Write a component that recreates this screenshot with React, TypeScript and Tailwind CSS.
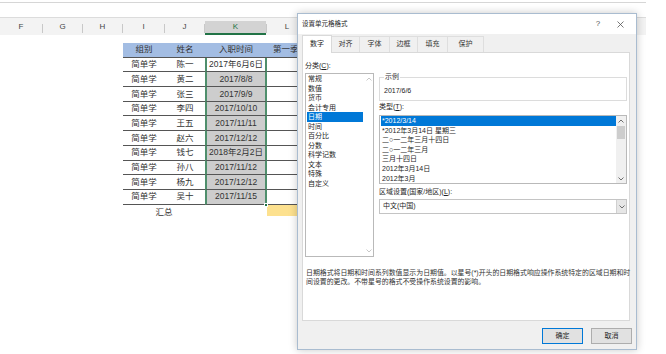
import React from 'react';

const font = "font-['Liberation_Sans','Noto_Sans_CJK_SC',sans-serif]";

const headerCols = [
  { name: 'F', w: 'w-[42px]' },
  { name: 'G', w: 'w-[39px]' },
  { name: 'H', w: 'w-[39px]' },
  { name: 'I', w: 'w-[41px]' },
  { name: 'J', w: 'w-[39px]' },
  { name: 'K', w: 'w-[61px]', active: true },
  { name: 'L', w: 'w-[40px]' },
];

const people = [
  ['陈一', '2017年6月6日'],
  ['黄二', '2017/8/8'],
  ['张三', '2017/9/9'],
  ['李四', '2017/10/10'],
  ['王五', '2017/11/11'],
  ['赵六', '2017/12/12'],
  ['钱七', '2018年2月2日'],
  ['孙八', '2017/11/12'],
  ['杨九', '2017/12/12'],
  ['吴十', '2017/11/15'],
];

const categories = ['常规', '数值', '货币', '会计专用', '日期', '时间', '百分比', '分数', '科学记数', '文本', '特殊', '自定义'];

const dateTypes = [
  '*2012/3/14',
  '*2012年3月14日 星期三',
  '二○一二年三月十四日',
  '二○一二年三月',
  '三月十四日',
  '2012年3月14日',
  '2012年3月',
];

const tabs = [
  { label: '对齐', w: 'w-[28px]' },
  { label: '字体', w: 'w-[30px]' },
  { label: '边框', w: 'w-[28px]' },
  { label: '填充', w: 'w-[30px]' },
  { label: '保护', w: 'w-[36px]' },
];

const Chevron: React.FC<{ up?: boolean; color?: string }> = ({ up, color = '#606060' }) => (
  <svg width="6" height="4" viewBox="0 0 6 4">
    <polyline
      points={up ? '0.5,3.5 3,1 5.5,3.5' : '0.5,0.5 3,3 5.5,0.5'}
      fill="none"
      stroke={color}
      strokeWidth="0.9"
    />
  </svg>
);

const Sheet: React.FC = () => (
  <div className="w-[646px] text-[#333]">
    <div className="h-[2px]" />
    <div className="h-[15px] border-t border-[#d6d6d6]" />
    <div className="flex h-[18px] bg-[#f3f3f3] border-t border-[#dcdcdc]">
      {headerCols.map((c) => (
        <React.Fragment key={c.name}>
          <div
            className={
              c.active
                ? `${c.w} flex items-center justify-center bg-[#d3d3d3] border-b-2 border-[#217346] text-[#217346] text-[8px] mt-[3px]`
                : `${c.w} flex items-center justify-center text-[8px] text-[#444]`
            }
          >
            {c.name}
          </div>
          <div className="w-px h-[9px] self-end mb-[2px] bg-[#c8c8c8]" />
        </React.Fragment>
      ))}
    </div>

    <div className="ml-[123px] mt-[8px] w-[200px] text-[8.5px]">
      <div className="flex h-[14.7px] bg-[#a3bde3]">
        <div className="w-[42px] flex items-center justify-center border-b border-[#555]">组别</div>
        <div className="w-[40px] flex items-center justify-center border-b border-[#555]">姓名</div>
        <div className="w-[62px] flex items-center justify-center border-b border-[#555]">入职时间</div>
        <div className="w-[56px] flex items-center pl-[6px] border-b border-[#555]">第一季度</div>
      </div>
      {people.map(([name, date], i) => (
        <div key={name} className="flex h-[14.7px]">
          <div className="w-[42px] flex items-center justify-center border-b border-[#555]">简单学</div>
          <div className="w-[40px] flex items-center justify-center border-b border-[#555]">{name}</div>
          <div
            className={
              i === 0
                ? 'relative w-[62px] flex items-center justify-center bg-white border-x-2 border-b border-x-[#4f8f6c] border-b-[#555]'
                : 'relative w-[62px] flex items-center justify-center bg-[#cdcdcd] border-x-2 border-b border-x-[#4f8f6c] border-b-[#555]'
            }
          >
            {date}
            {i === people.length - 1 && (
              <div className="absolute -right-[3px] -bottom-[3px] w-[4px] h-[4px] bg-[#217346] border border-white" />
            )}
          </div>
          <div className="w-[56px] border-b border-[#555]" />
        </div>
      ))}
      <div className="flex h-[14.7px]">
        <div className="w-[82px] flex items-center justify-center">汇总</div>
        <div className="w-[62px]" />
        <div className="w-[56px] h-[11px] bg-[#fde18f]" />
      </div>
    </div>
  </div>
);

const Dialog: React.FC = () => (
  <div className="absolute left-[297px] top-[13px] w-[340px] h-[337px] border border-[#a9bcd0] bg-[#f0f0f0] shadow-[0_0_8px_rgba(0,0,0,0.22)] flex flex-col text-[#1e1e1e]">
    {/* title bar */}
    <div className="h-[20px] bg-white flex items-center pl-[4px] pr-[6px]">
      <span className="text-[6.5px] leading-[8px]">设置单元格格式</span>
      <div className="flex-1" />
      <span className="w-[20px] text-center text-[8px] leading-[10px] text-[#555] mr-[2px]">?</span>
      <span className="w-[20px] flex justify-center">
        <svg width="7" height="7" viewBox="0 0 7 7">
          <path d="M0.5 0.5 L6.5 6.5 M6.5 0.5 L0.5 6.5" stroke="#555" strokeWidth="0.8" />
        </svg>
      </span>
    </div>

    {/* tabs */}
    <div className="h-[18px] flex items-end pl-[4px] text-[7px]">
      <div className="relative z-10 w-[30px] h-[18px] -mb-px bg-white border border-b-0 border-[#d9d9d9] flex items-center justify-center">
        数字
      </div>
      {tabs.map((t) => (
        <div
          key={t.label}
          className={`${t.w} h-[16px] border-t border-r border-[#dedede] flex items-center justify-center text-[#333]`}
        >
          {t.label}
        </div>
      ))}
    </div>

    {/* pane */}
    <div className="ml-[4px] w-[328px] h-[269px] bg-white border border-[#d9d9d9] text-[7px]">
      <div className="flex pl-[2px] gap-[5px]">
        <div className="w-[69px] pt-[8px]">
          <div className="leading-[10px] mb-[2px]">
            分类(<span className="underline">C</span>):
          </div>
          <div className="h-[184px] border border-[#b9b9b9] flex">
            <div className="flex-1 p-[1px] pt-0">
              {categories.map((c) => (
                <div
                  key={c}
                  className={
                    c === '日期'
                      ? 'h-[9.5px] leading-[9.5px] pl-[1px] bg-[#0078d7] text-white'
                      : 'h-[9.5px] leading-[9.5px] pl-[1px]'
                  }
                >
                  {c}
                </div>
              ))}
            </div>
            <div className="w-[9px] flex flex-col justify-between items-center py-[3px]">
              <Chevron up color="#c2c2c2" />
              <Chevron color="#c2c2c2" />
            </div>
          </div>
        </div>

        <div className="w-[248px] pt-[19px]">
          <fieldset className="border border-[#dcdcdc] px-[4px] pt-[4px] pb-[4px]">
            <legend className="leading-[10px] px-[1px] text-[#333]">示例</legend>
            <div className="leading-[10px]">2017/6/6</div>
          </fieldset>
          <div className="leading-[10px] mt-[1px]">
            类型(<span className="underline">T</span>):
          </div>
          <div className="h-[69px] mt-[3px] border border-[#b9b9b9] flex">
            <div className="flex-1 pl-[1px]">
              {dateTypes.map((d, i) => (
                <div
                  key={d}
                  className={
                    i === 0
                      ? 'h-[9.6px] leading-[9.6px] pl-[1px] bg-[#0078d7] text-white'
                      : 'h-[9.6px] leading-[9.6px] pl-[1px] whitespace-nowrap'
                  }
                >
                  {d}
                </div>
              ))}
            </div>
            <div className="w-[10px] bg-[#f0f0f0] flex flex-col items-center">
              <div className="h-[10px] flex items-center">
                <Chevron up />
              </div>
              <div className="w-[8px] h-[13px] bg-[#cdcdcd]" />
              <div className="flex-1" />
              <div className="h-[9px] flex items-center">
                <Chevron />
              </div>
            </div>
          </div>
          <div className="leading-[10px] mt-[3px]">
            区域设置(国家/地区)(<span className="underline">L</span>):
          </div>
          <div className="h-[15px] mt-[2px] border border-[#c4c4c4] flex">
            <div className="flex-1 flex items-center pl-[3px]">中文(中国)</div>
            <div className="w-[10px] bg-[#e6e6e6] border-l border-[#d0d0d0] flex items-center justify-center">
              <Chevron />
            </div>
          </div>
        </div>
      </div>

      <div className="mt-[11px] pl-[3px] leading-[9px] whitespace-nowrap text-[6.9px] text-[#333]">
        <div>日期格式将日期和时间系列数值显示为日期值。以星号(*)开头的日期格式响应操作系统特定的区域日期和时</div>
        <div>间设置的更改。不带星号的格式不受操作系统设置的影响。</div>
      </div>
    </div>

    {/* footer */}
    <div className="flex-1 flex justify-end items-start pt-[7px] pr-[4px] gap-[8px] text-[7px]">
      <div className="w-[41px] h-[16px] bg-[#e1e1e1] border border-[#0078d7] flex items-center justify-center">确定</div>
      <div className="w-[41px] h-[16px] bg-[#e1e1e1] border border-[#adadad] flex items-center justify-center">取消</div>
    </div>
  </div>
);

export default function App() {
  return (
    <div className={`relative w-[666px] h-[354px] overflow-hidden bg-white ${font}`}>
      <Sheet />
      <Dialog />
    </div>
  );
}
